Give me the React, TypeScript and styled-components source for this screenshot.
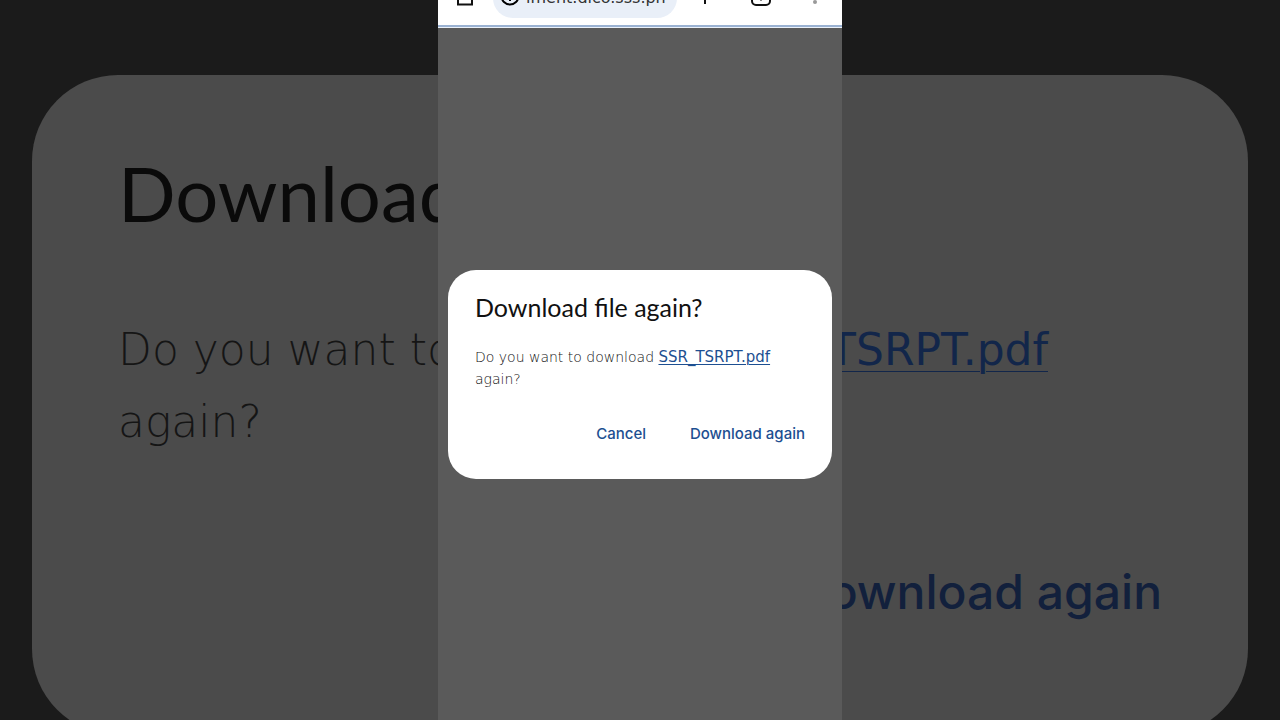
import React from "react";
import styled, { createGlobalStyle } from "styled-components";

const GlobalStyle = createGlobalStyle`
  *, *::before, *::after { box-sizing: border-box; }
  body { margin: 0; background: #1b1b1b; }
`;

const headingFont = `"Lato", "Liberation Sans", sans-serif`;
const buttonFont = `"Inter", "Liberation Sans", sans-serif`;
const thinFont = `"DejaVu Sans Light", "DejaVu Sans", sans-serif`;
const regularFont = `"DejaVu Sans", sans-serif`;

const Stage = styled.main`
  position: relative;
  display: flex;
  justify-content: center;
  min-height: 100vh;
  overflow: hidden;
`;

/* Enlarged, dimmed copy of the dialog behind the phone screen */
const Backdrop = styled.div`
  position: absolute;
  inset: 75px 32px auto;
  height: 660px;
  padding: 76px 86px;
  border-radius: 86px;
  background: #4b4b4b;
`;

const BackdropTitle = styled.div`
  font: 400 76px/84px ${headingFont};
  color: #0a0a0a;
`;

const BackdropText = styled.div`
  display: flex;
  justify-content: space-between;
  margin-top: 79px;
  padding-right: 114px;
  font: 200 44px/72px ${thinFont};
  color: #151515;
`;

const BackdropFile = styled.span`
  font-family: ${regularFont};
  font-weight: 400;
  color: #12264a;
  text-decoration: underline;
  text-decoration-thickness: 1px;
  text-underline-offset: 6px;
`;

const BackdropAction = styled.div`
  margin-top: 104px;
  text-align: right;
  font: 500 48px/60px ${buttonFont};
  color: #12203c;
`;

const Phone = styled.section`
  position: relative;
  display: flex;
  flex-direction: column;
  width: 404px;
  max-width: 100%;
  background: #5a5a5a;
`;

const Toolbar = styled.header`
  display: flex;
  align-items: flex-end;
  height: 25px;
  padding: 0 15px 7px;
  overflow: hidden;
  background: #fff;
`;

const ToolbarRow = styled.div`
  display: flex;
  flex: 1;
  align-items: center;
  gap: 16px;
  height: 40px;
`;

const IconGroup = styled.div`
  display: flex;
  gap: 31px;
`;

const IconButton = styled.button`
  display: flex;
  padding: 0;
  border: 0;
  background: none;
  color: #111;
`;

const AddressBar = styled.div`
  display: flex;
  flex: 1;
  align-items: center;
  gap: 4px;
  height: 40px;
  padding-left: 5px;
  border-radius: 20px;
  background: #e9eff8;
`;

const Address = styled.span`
  font: 400 16px/20px ${regularFont};
  color: #333;
  white-space: nowrap;
`;

const Progress = styled.div`
  height: 3px;
  background: #9bb2d2;
  border-bottom: 1px solid #eaf1fa;
`;

const Dialog = styled.div`
  margin: 242px 10px 0;
  padding: 21px 27px 29px;
  border-radius: 28px;
  background: #fff;
`;

const Title = styled.h1`
  margin: 0;
  font: 400 25px/32px ${headingFont};
  color: #111;
`;

const Message = styled.p`
  margin: 23px 0 0;
  font: 200 14px/22px ${thinFont};
  color: #111;
`;

const FileLink = styled.a`
  font: 400 15px/22px ${regularFont};
  color: #1d4f91;
  text-decoration-thickness: 1px;
  text-underline-offset: 2px;
`;

const Actions = styled.div`
  display: flex;
  justify-content: flex-end;
  gap: 44px;
  margin-top: 28px;
`;

const Action = styled.button`
  padding: 0;
  border: 0;
  background: none;
  font: 500 15px/32px ${buttonFont};
  color: #1d4f91;
`;

const Icon = ({ children }: { children: React.ReactNode }) => (
  <svg width="24" height="24" viewBox="0 0 24 24" fill="none" stroke="currentColor" strokeWidth="2" aria-hidden="true">
    {children}
  </svg>
);

export default function App() {
  return (
    <>
      <GlobalStyle />
      <Stage>
        <Backdrop aria-hidden="true">
          <BackdropTitle>Download</BackdropTitle>
          <BackdropText>
            <span>
              Do you want to
              <br />
              again?
            </span>
            <BackdropFile>TSRPT.pdf</BackdropFile>
          </BackdropText>
          <BackdropAction>Download again</BackdropAction>
        </Backdrop>
        <Phone>
          <Toolbar>
            <ToolbarRow>
              <IconButton aria-label="Home">
                <Icon>
                  <path d="M5 18.5V9l7-6 7 6v9.500z" />
                </Icon>
              </IconButton>
              <AddressBar>
                <Icon>
                  <circle cx="12" cy="10" r="8.500" />
                  <path d="M12 9v6M12 5v2" />
                </Icon>
                <Address>iment.dico.sss.ph</Address>
              </AddressBar>
              <IconGroup>
                <IconButton aria-label="New tab">
                  <Icon>
                    <path d="M12 2v16M4 10h16" />
                  </Icon>
                </IconButton>
                <IconButton aria-label="Tabs">
                  <Icon>
                    <rect x="4" y="1" width="18" height="18" rx="4" />
                    <path d="M13 7v8" stroke="#888" />
                  </Icon>
                </IconButton>
                <IconButton aria-label="Menu">
                  <Icon>
                    <g fill="#999" stroke="none">
                      <circle cx="12" cy="4" r="2" />
                      <circle cx="12" cy="10" r="2" />
                      <circle cx="12" cy="16" r="2" />
                    </g>
                  </Icon>
                </IconButton>
              </IconGroup>
            </ToolbarRow>
          </Toolbar>
          <Progress />
          <Dialog role="dialog" aria-labelledby="dialog-title">
            <Title id="dialog-title">Download file again?</Title>
            <Message>
              Do you want to download <FileLink href="#file">SSR_TSRPT.pdf</FileLink> again?
            </Message>
            <Actions>
              <Action>Cancel</Action>
              <Action>Download again</Action>
            </Actions>
          </Dialog>
        </Phone>
      </Stage>
    </>
  );
}
